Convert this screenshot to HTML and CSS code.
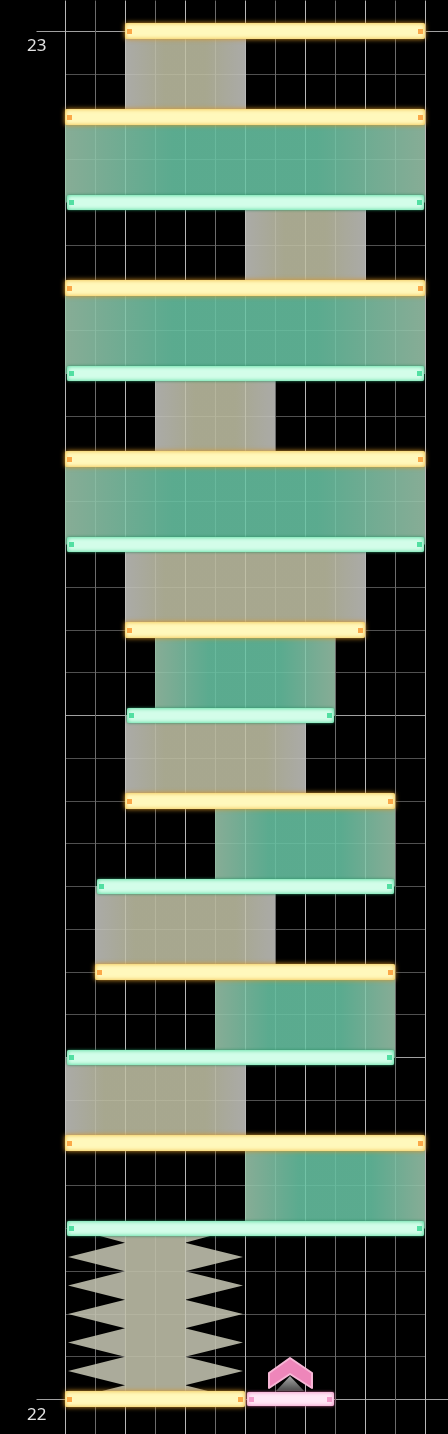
FILE: index.html
```html
<!doctype html>
<html>
<head>
<meta charset="utf-8">
<title>Chart</title>
<link rel="stylesheet" href="styles.css">
</head>
<body>
<div class="chart">
	<!-- grid -->
	<svg class="grid" width="448" height="1434">
		<path class="line-beat" d="M65 74H425M65 117H425M65 159H425M65 202H425M65 245H425M65 288H425M65 330H425M65 416H425M65 459H425M65 501H425M65 544H425M65 587H425M65 630H425M65 672H425M65 758H425M65 801H425M65 843H425M65 886H425M65 929H425M65 972H425M65 1014H425M65 1100H425M65 1143H425M65 1185H425M65 1228H425M65 1271H425M65 1314H425M65 1356H425"/>
		<path class="line-measure" d="M36 31H448M65 373H425M65 715H425M65 1057H425M36 1399H448"/>
		<path class="line-dim" d="M95 0V1434M155 0V1434M215 0V1434M275 0V1434M335 0V1434M395 0V1434"/>
		<path class="line-main" d="M65 0V1434M125 0V1434M185 0V1434M245 0V1434M305 0V1434M365 0V1434M425 0V1434"/>
	</svg>

	<span class="measure" style="top:33px">23</span>
	<span class="measure" style="top:1402px">22</span>

	<!-- hold bodies -->
	<div class="body grey" style="left:125px;top:31px;width:120px;height:86px"></div>
	<div class="body green" style="left:65px;top:117px;width:360px;height:85px"></div>
	<div class="body grey" style="left:245px;top:202px;width:120px;height:86px"></div>
	<div class="body green" style="left:65px;top:288px;width:360px;height:85px"></div>
	<div class="body grey" style="left:155px;top:373px;width:120px;height:86px"></div>
	<div class="body green" style="left:65px;top:459px;width:360px;height:85px"></div>
	<div class="body grey" style="left:125px;top:544px;width:240px;height:86px"></div>
	<div class="body green" style="left:155px;top:630px;width:180px;height:85px"></div>
	<div class="body grey" style="left:125px;top:715px;width:180px;height:86px"></div>
	<div class="body green" style="left:215px;top:801px;width:180px;height:85px"></div>
	<div class="body grey" style="left:95px;top:886px;width:180px;height:86px"></div>
	<div class="body green" style="left:215px;top:972px;width:180px;height:85px"></div>
	<div class="body grey" style="left:65px;top:1057px;width:180px;height:86px"></div>
	<div class="body green" style="left:245px;top:1143px;width:180px;height:85px"></div>

	<!-- spiked hold -->
	<svg class="spikes" width="448" height="1434">
		<path class="spike-fill" d="M100 1236H210L185 1242.75L243 1257L185 1271.25L243 1285.5L185 1299.75L243 1314L185 1328.25L243 1342.5L185 1356.75L243 1371L185 1385.25L212 1392V1399H98V1392L125 1385.25L68 1371L125 1356.75L68 1342.5L125 1328.25L68 1314L125 1299.75L68 1285.5L125 1271.25L68 1257L125 1242.75Z"/>
		<rect class="spike-core" x="125" y="1236" width="60" height="163"/>
	</svg>

	<!-- flick arrow -->
	<svg class="arrow" width="448" height="1434">
		<defs>
			<linearGradient id="arrow-shade" x1="0" y1="0" x2="0" y2="1">
				<stop offset="0" stop-color="#a8a8a8"/>
				<stop offset="1" stop-color="#4a4a4a"/>
			</linearGradient>
		</defs>
		<path d="M290 1376L304 1391H276Z" fill="url(#arrow-shade)"/>
		<path class="arrow-head" d="M290 1358L312 1373V1388L290 1374L269 1388V1373Z"/>
	</svg>

	<!-- bars -->
	<div class="bar yellow" style="left:125px;top:23px;width:300px"><i></i><i></i></div>
	<div class="bar yellow" style="left:65px;top:109px;width:360px"><i></i><i></i></div>
	<div class="bar mint" style="left:67px;top:195px;width:357px"><i></i><i></i></div>
	<div class="bar yellow" style="left:65px;top:280px;width:360px"><i></i><i></i></div>
	<div class="bar mint" style="left:67px;top:366px;width:357px"><i></i><i></i></div>
	<div class="bar yellow" style="left:65px;top:451px;width:360px"><i></i><i></i></div>
	<div class="bar mint" style="left:67px;top:537px;width:357px"><i></i><i></i></div>
	<div class="bar yellow" style="left:125px;top:622px;width:240px"><i></i><i></i></div>
	<div class="bar mint" style="left:127px;top:708px;width:207px"><i></i><i></i></div>
	<div class="bar yellow" style="left:125px;top:793px;width:270px"><i></i><i></i></div>
	<div class="bar mint" style="left:97px;top:879px;width:297px"><i></i><i></i></div>
	<div class="bar yellow" style="left:95px;top:964px;width:300px"><i></i><i></i></div>
	<div class="bar mint" style="left:67px;top:1050px;width:327px"><i></i><i></i></div>
	<div class="bar yellow" style="left:65px;top:1135px;width:360px"><i></i><i></i></div>
	<div class="bar mint" style="left:67px;top:1221px;width:357px"><i></i><i></i></div>
	<div class="bar yellow" style="left:65px;top:1391px;width:180px"><i></i><i></i></div>
	<div class="bar pink" style="left:247px;top:1392px;width:87px"><i></i><i></i></div>
</div>
</body>
</html>
```

FILE: styles.css
```css
* { margin: 0; padding: 0; box-sizing: border-box; }

body {
	background: #000;
	overflow: hidden;
}

.chart {
	position: relative;
	width: 448px;
	height: 1434px;
	overflow: hidden;
	background: #000;
	filter: blur(.35px);
}

.grid,
.spikes,
.arrow {
	position: absolute;
	left: 0;
	top: 0;
}

.grid path { fill: none; stroke-width: 1; transform: translate(0.5px, 0.5px); }
.line-beat { stroke: #505050; }
.line-measure { stroke: #a0a0a0; }
.line-dim { stroke: #6c6c6c; }
.line-main { stroke: #b8b8b8; }

.measure {
	position: absolute;
	left: 27px;
	font: 17px/24px "Noto Sans", sans-serif;
	color: #e2e2e2;
}

/* hold bodies */
.body { position: absolute; }

.grey {
	background: linear-gradient(90deg, rgba(196,196,192,.87), rgba(192,192,164,.87) 40px, rgba(192,192,164,.87) calc(100% - 40px), rgba(196,196,192,.87));
}

.green {
	background: linear-gradient(90deg, rgba(155,198,172,.87), rgba(104,196,164,.87) 30%, rgba(104,196,164,.87) 70%, rgba(155,198,172,.87));
}

/* spiked hold */
.spike-fill { fill: rgba(196,196,178,.87); }
.spike-core { fill: rgba(168,168,130,.15); }

/* flick arrow */
.arrow-head {
	fill: #ee86ba;
	stroke: #f7b6d6;
	stroke-width: 2;
	stroke-linejoin: round;
}

/* bars */
.bar {
	position: absolute;
	height: 16px;
	display: flex;
	justify-content: space-between;
	align-items: center;
	padding: 0 2px;
	border-radius: 2px;
	filter: blur(.7px);
}

.bar i {
	display: block;
	width: 5px;
	height: 5px;
}

.yellow {
	background: #fff8bc;
	box-shadow: inset 0 0 4px #eeb83c, 0 0 5px #d8962a;
}
.yellow i { background: #fba848; }

.mint {
	height: 15px;
	background: #d3fde9;
	box-shadow: inset 0 0 4px #3fd490, 0 0 3px #2a8a60;
}
.mint i { background: #52dfa2; }

.pink {
	height: 14px;
	background: #ffe8f6;
	box-shadow: inset 0 0 4px #ee85bd, 0 0 3px #c0608f;
}
.pink i { background: #f49ccb; }
```
